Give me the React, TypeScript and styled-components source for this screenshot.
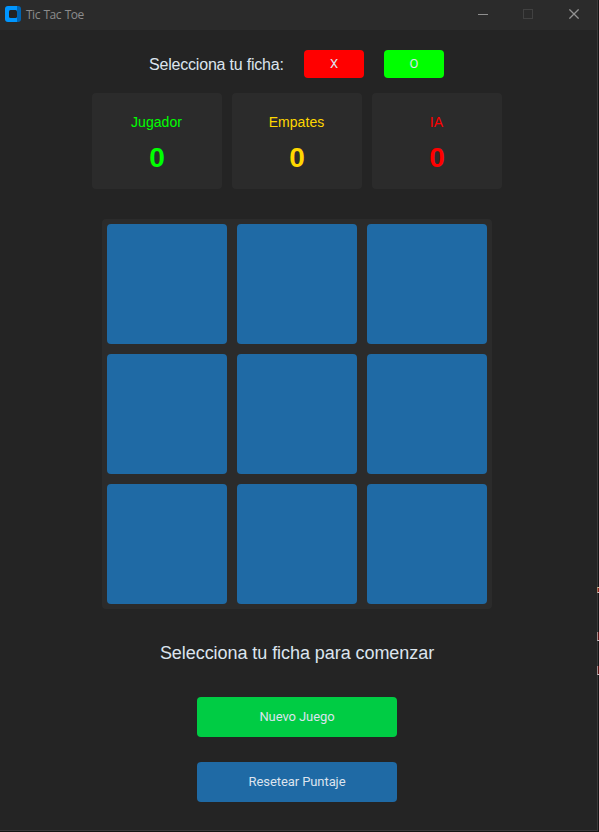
import React from 'react';
import styled, { createGlobalStyle } from 'styled-components';

const GlobalStyle = createGlobalStyle`
  * { box-sizing: border-box; }
  body { margin: 0; background: #151515; overflow: hidden; }
  button { border: 0; padding: 0; margin: 0; }
`;

const Desktop = styled.div`
  position: relative;
  width: 599px;
  height: 832px;
  background: #151515;
`;

const Window = styled.div`
  width: 598px;
  height: 831px;
  display: flex;
  flex-direction: column;
  background: #242424;
  border-right: 1px solid #3a3a3a;
  border-bottom: 1px solid #3a383b;
  font-family: 'Liberation Sans', Arial, sans-serif;
`;

const TitleBar = styled.header`
  height: 30px;
  flex: none;
  display: flex;
  align-items: center;
  background: #2b2b2b;
  padding: 0 0 2px 5px;
`;

const Title = styled.span`
  margin-left: 5px;
  padding-top: 2px;
  flex: 1;
  font: 12px/16px 'Open Sans', 'Noto Sans', sans-serif;
  letter-spacing: -0.5px;
  word-spacing: 1px;
  color: #8c8c8c;
`;

const WindowControl = styled.span`
  width: 45px;
  height: 28px;
  display: flex;
  align-items: center;
  justify-content: center;

  &:last-child {
    width: 47px;
  }
`;

const Content = styled.main`
  width: 594px;
  display: flex;
  flex-direction: column;
  align-items: center;
`;

const Selector = styled.div`
  display: flex;
  align-items: center;
  gap: 20px;
  height: 28px;
  width: 295px;
  margin: 20px 1px 0 0;
`;

const SelectorLabel = styled.span`
  width: 135px;
  padding-top: 2px;
  font-size: 16px;
  line-height: 20px;
  letter-spacing: -0.2px;
  white-space: nowrap;
  color: #dce4ee;
`;

const TokenButton = styled.button<{ $color: string }>`
  width: 60px;
  height: 28px;
  border-radius: 4px;
  background: ${(p) => p.$color};
  color: #dce4ee;
  font: 13px/26px Roboto, sans-serif;
`;

const Scores = styled.div`
  display: flex;
  gap: 10px;
  margin-top: 15px;
`;

const ScoreCard = styled.div<{ $color: string }>`
  width: 130px;
  height: 96px;
  border-radius: 4px;
  background: #2b2b2b;
  color: ${(p) => p.$color};
  display: flex;
  flex-direction: column;
  align-items: center;
  padding-top: 20px;
`;

const ScoreName = styled.span`
  font-size: 14px;
  line-height: 18px;
  letter-spacing: 0.05px;
  margin-right: 1px;
`;

const ScoreValue = styled.span`
  font-size: 28px;
  font-weight: 700;
  line-height: 32px;
  margin-top: 11px;
`;

const Board = styled.div`
  display: grid;
  grid-template-columns: repeat(3, 120px);
  grid-auto-rows: 120px;
  gap: 10px;
  padding: 5px;
  margin-top: 30px;
  border-radius: 4px;
  background: #2b2b2b;
`;

const Cell = styled.button`
  border-radius: 4px;
  background: #1f6aa5;
`;

const Status = styled.p`
  margin: 33px 0 0;
  font-size: 18px;
  line-height: 22px;
  letter-spacing: -0.06px;
  white-space: nowrap;
  color: #dce4ee;
`;

const Actions = styled.div`
  display: flex;
  flex-direction: column;
  gap: 25px;
  margin-top: 33px;
`;

const ActionButton = styled.button<{ $color: string }>`
  width: 200px;
  height: 40px;
  border-radius: 4px;
  background: ${(p) => p.$color};
  color: #dce4ee;
  font: 13px/38px Roboto, sans-serif;
  letter-spacing: -0.08px;
`;

const EdgeMark = styled.span<{ $top: number; $height: number; $color: string; $edge: string }>`
  position: absolute;
  left: 597px;
  top: ${(p) => p.$top}px;
  width: 2px;
  height: ${(p) => p.$height}px;
  background: ${(p) => p.$color};
  border-left: 1px solid ${(p) => p.$edge};
  border-bottom: 1px solid #c8c0c8;
`;

const EdgeCap = styled(EdgeMark)`
  border-top: 1px solid #c8c0a0;
`;

const scores = [
  { name: 'Jugador', color: '#00ff00' },
  { name: 'Empates', color: '#ffd700' },
  { name: 'IA', color: '#ff0000' },
];

export default function App() {
  return (
    <Desktop>
      <GlobalStyle />
      <Window>
        <TitleBar>
          <svg width="16" height="16" viewBox="0 0 16 16">
            <path d="M3 0H12V16H3Q0 16 0 13V3Q0 0 3 0Z" fill="#0096ff" />
            <path d="M12 0H13Q16 0 16 3V13Q16 16 13 16H12Z" fill="#0065b3" />
            <rect x="4" y="4" width="8" height="8" rx="1.5" fill="#232323" />
          </svg>
          <Title>Tic Tac Toe</Title>
          <WindowControl>
            <svg width="10" height="10"><path d="M0 5.5H10" stroke="#8f8f8f" /></svg>
          </WindowControl>
          <WindowControl>
            <svg width="10" height="10" shapeRendering="crispEdges"><rect x=".5" y=".5" width="9" height="9" fill="none" stroke="#414141" /></svg>
          </WindowControl>
          <WindowControl>
            <svg width="10" height="10"><path d="M.4 .4L9.6 9.6M9.6 .4L.4 9.6" stroke="#929292" strokeWidth="1.3" /></svg>
          </WindowControl>
        </TitleBar>
        <Content>
          <Selector>
            <SelectorLabel>Selecciona tu ficha:</SelectorLabel>
            <TokenButton $color="#ff0000">X</TokenButton>
            <TokenButton $color="#00ff00">O</TokenButton>
          </Selector>
          <Scores>
            {scores.map((s) => (
              <ScoreCard key={s.name} $color={s.color}>
                <ScoreName>{s.name}</ScoreName>
                <ScoreValue>0</ScoreValue>
              </ScoreCard>
            ))}
          </Scores>
          <Board>
            {Array.from({ length: 9 }, (_, i) => (
              <Cell key={i} />
            ))}
          </Board>
          <Status>Selecciona tu ficha para comenzar</Status>
          <Actions>
            <ActionButton $color="#00cc44">Nuevo Juego</ActionButton>
            <ActionButton $color="#1f6aa5">Resetear Puntaje</ActionButton>
          </Actions>
        </Content>
      </Window>
      <EdgeCap $top={587} $height={6} $color="#8a2020" $edge="#a07858" />
      <EdgeMark $top={632} $height={9} $color="#5c1515" $edge="#a08e8e" />
      <EdgeMark $top={666} $height={9} $color="#5c1515" $edge="#a08e8e" />
    </Desktop>
  );
}
